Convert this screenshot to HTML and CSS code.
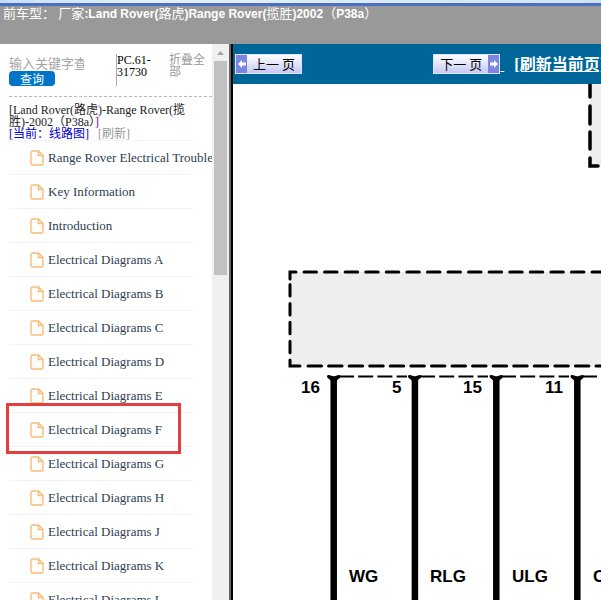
FILE: index.html
```html
<!DOCTYPE html>
<html lang="zh-CN">
<head>
<meta charset="utf-8">
<meta name="viewport" content="width=device-width, initial-scale=1">
<title>Range Rover 2002 (P38a)</title>
<link rel="stylesheet" href="styles.css">
</head>
<body>
<svg class="defs" aria-hidden="true">
  <symbol id="file" viewBox="0 0 14 16">
    <path d="M2.500 1H8.500L13 5.500V13.500Q13 15 11.500 15H2.500Q1 15 1 13.500V2.500Q1 1 2.500 1ZM8.500 1V5.500H13" fill="#fffdf8" stroke="#f5bd7c" stroke-width="1.400"/>
  </symbol>
  <symbol id="left" viewBox="0 0 8 8">
    <path d="M4 0V2.500H8V5.500H4V8L0 4Z" fill="#fff"/>
  </symbol>
  <symbol id="right" viewBox="0 0 8 8">
    <path d="M4 0V2.500H0V5.500H4V8L8 4Z" fill="#fff"/>
  </symbol>
</svg>
<header class="header"><span class="wide">前车型：</span> <span class="wide">厂家</span>:Land Rover(<span class="wide">路虎</span>)Range Rover(<span class="wide">揽胜</span>)2002<span class="wide">（</span>P38a<span class="wide">）</span></header>
<div class="frames">
  <aside class="sidebar">
    <div class="panel">
      <div class="tools">
        <form class="search">
          <input class="keyword" type="text" placeholder="输入关键字查询" aria-label="输入关键字查询">
          <button class="submit" type="button">查询</button>
        </form>
        <div class="code">PC.61-31730</div>
        <a class="fold" href="#">折叠全部</a>
      </div>
      <div class="path">[Land Rover(路虎)-Range Rover(揽胜)-2002（P38a）<span class="close">]</span><br><a class="current" href="#">[当前：线路图]</a><a class="refresh" href="#">[刷新]</a></div>
      <ul class="list">
        <li><a href="#"><svg><use href="#file"/></svg>Range Rover Electrical Troubleshooting</a></li>
        <li><a href="#"><svg><use href="#file"/></svg>Key Information</a></li>
        <li><a href="#"><svg><use href="#file"/></svg>Introduction</a></li>
        <li><a href="#"><svg><use href="#file"/></svg>Electrical Diagrams A</a></li>
        <li><a href="#"><svg><use href="#file"/></svg>Electrical Diagrams B</a></li>
        <li><a href="#"><svg><use href="#file"/></svg>Electrical Diagrams C</a></li>
        <li><a href="#"><svg><use href="#file"/></svg>Electrical Diagrams D</a></li>
        <li><a href="#"><svg><use href="#file"/></svg>Electrical Diagrams E</a></li>
        <li class="marked"><a href="#"><svg><use href="#file"/></svg>Electrical Diagrams F</a></li>
        <li><a href="#"><svg><use href="#file"/></svg>Electrical Diagrams G</a></li>
        <li><a href="#"><svg><use href="#file"/></svg>Electrical Diagrams H</a></li>
        <li><a href="#"><svg><use href="#file"/></svg>Electrical Diagrams J</a></li>
        <li><a href="#"><svg><use href="#file"/></svg>Electrical Diagrams K</a></li>
        <li><a href="#"><svg><use href="#file"/></svg>Electrical Diagrams L</a></li>
      </ul>
    </div>
    <div class="scrollbar" aria-hidden="true">
      <svg class="up" viewBox="0 0 17 17"><path d="M5 11H12L8.500 7Z" fill="#a3a3a3"/></svg>
      <div class="thumb"></div>
    </div>
  </aside>
  <main class="main">
    <nav class="pager">
      <button class="page" type="button"><span class="arrow"><svg><use href="#left"/></svg></span><span class="label">上一 页</span></button>
      <div class="onward">
        <button class="page" type="button"><span class="label">下一 页</span><span class="arrow"><svg><use href="#right"/></svg></span></button>
        <a class="tail" href="#">&nbsp;</a>
        <a class="reload" href="#">[刷新当前页]</a>
      </div>
    </nav>
    <svg class="diagram" viewBox="233 84 368 516" preserveAspectRatio="xMinYMin slice">
      <g fill="#eee">
        <rect x="590" y="80" width="200" height="86"/>
        <rect x="290" y="272" width="500" height="94"/>
      </g>
      <g fill="none" stroke="#000" stroke-width="3" stroke-linecap="round">
        <path d="M590 80V97M590 106V124M590 132V149M590 158V166H598" stroke-width="3.500"/>
        <path d="M290 279V272H296"/>
        <path d="M304 272H790" stroke-dasharray="12.500 8.070"/>
        <path d="M290 284.500V360" stroke-dasharray="11.500 7.400"/>
        <path d="M290 360V366H300"/>
        <path d="M308 366H790" stroke-dasharray="13.500 7.070"/>
      </g>
      <g fill="none" stroke="#000" stroke-width="2">
        <path d="M339 376.500H407" stroke-dasharray="15 4.200"/>
        <path d="M420 376.500H488" stroke-dasharray="15 4.200"/>
        <path d="M501 376.500H569" stroke-dasharray="15 4.200"/>
        <path d="M582 376.500H790" stroke-dasharray="15 4.200"/>
      </g>
      <g fill="#000" stroke="#000" stroke-width="3" stroke-linejoin="round" stroke-linecap="round">
        <path d="M328.500 376.500L333.700 381L339 376.500L333.700 378Z"/>
        <path d="M409.500 376.500L414.900 381L420 376.500L414.900 378Z"/>
        <path d="M491 376.500L496.300 381L501.500 376.500L496.300 378Z"/>
        <path d="M572 376.500L577.300 381L582.500 376.500L577.300 378Z"/>
      </g>
      <path d="M333.700 378V900M414.900 378V900M496.300 378V900M577.300 378V900" stroke="#000" stroke-width="6.500"/>
      <g class="pins">
        <text x="301" y="393">16</text>
        <text x="392" y="393">5</text>
        <text x="463" y="393">15</text>
        <text x="545" y="393">11</text>
        <text x="349" y="582">WG</text>
        <text x="430" y="582">RLG</text>
        <text x="512" y="582">ULG</text>
        <text x="593" y="582">OG</text>
      </g>
    </svg>
  </main>
</div>
</body>
</html>
```
FILE: styles.css
```css
*,
*::after {
  box-sizing: border-box;
}

body {
  display: flex;
  flex-direction: column;
  height: 100vh;
  margin: 0;
  overflow: hidden;
  background: #fff;
  font-family: "Liberation Serif", "Noto Sans CJK SC", serif;
  font-size: 12px;
  line-height: 12px;
}

a {
  color: inherit;
  text-decoration: none;
}

.defs {
  position: absolute;
  width: 0;
  height: 0;
}

.header {
  flex: none;
  height: 44px;
  padding: 4px 3px;
  background:
    linear-gradient(to right, #c9ddf2, #e6f0fa 25%, #d3e1f4) 0 0 / 100% 3px no-repeat,
    linear-gradient(#4a70c4, #4a70c4) 0 3px / 100% 3px no-repeat,
    #999;
  color: #fff;
  font: bold 12px/20px "Liberation Sans", "Noto Sans CJK SC", sans-serif;
  white-space: nowrap;
}

.wide {
  font-size: 13px;
  font-weight: 400;
}

.frames {
  display: flex;
  flex: 1;
  min-height: 0;
}

.sidebar {
  display: flex;
  flex: none;
  width: 233px;
  border-right: 2px solid #000;
}

.panel {
  flex: 1;
  min-width: 0;
  padding: 10px 0 0 9px;
  overflow: hidden;
}

.tools {
  display: flex;
  height: 43px;
  border-bottom: 1px dashed #bbb;
}

.search {
  width: 107px;
  padding-top: 3px;
}

.keyword {
  display: block;
  width: 75px;
  height: 14px;
  padding: 0;
  border: 0;
  outline: 0;
  background: none;
  font: 13px/14px "Liberation Sans", "Noto Sans CJK SC", sans-serif;
}

.keyword::placeholder {
  color: #a5a5a5;
  opacity: 1;
}

.submit {
  display: block;
  width: 46px;
  height: 15px;
  padding: 0;
  border: 0;
  border-radius: 4px;
  background: #0075c8;
  color: #fff;
  font: 12px/14px "Noto Sans CJK SC", sans-serif;
}

.code {
  width: 53px;
  height: 32px;
  padding-right: 12px;
  border-left: 1px solid #aaa;
  overflow-wrap: anywhere;
}

.fold {
  width: 37px;
  color: #999;
}

.path {
  padding: 7px 20px 0 0;
  color: #222;
}

.close {
  color: #808;
}

.current {
  color: #00c;
}

.refresh {
  margin-left: 9px;
  color: #999;
}

.list {
  margin: 0;
  padding: 0;
  list-style: none;
}

.list li {
  position: relative;
  width: 184px;
  border-bottom: 1px solid #f2f2f2;
}

.list li:first-child {
  border-top: 1px solid #f4f4f4;
}

.list a {
  display: flex;
  align-items: center;
  gap: 4px;
  height: 33px;
  padding-left: 21px;
  color: #2c3e50;
  font-size: 13px;
  line-height: 16px;
  white-space: nowrap;
}

.list svg {
  flex: none;
  width: 14px;
  height: 16px;
}

.list .marked::after {
  content: "";
  position: absolute;
  top: -10px;
  left: -3px;
  z-index: 1;
  width: 175px;
  height: 51px;
  border: 3px solid #e53e3e;
  pointer-events: none;
}

.scrollbar {
  flex: none;
  width: 19px;
  border-right: 2px solid #666;
  background: #f0f0f0;
}

.up {
  display: block;
  width: 17px;
  height: 17px;
}

.thumb {
  width: 13px;
  height: 214px;
  margin: 0 2px;
  background: #c1c1c1;
}

.main {
  display: flex;
  flex: 1;
  flex-direction: column;
  min-width: 0;
}

.pager {
  display: flex;
  flex: none;
  align-items: center;
  justify-content: space-between;
  height: 40px;
  padding-left: 2px;
  overflow: hidden;
  background: #069;
}

.onward {
  display: flex;
  flex: none;
  align-items: center;
  margin-right: -4px;
}

.page {
  display: flex;
  flex: none;
  align-items: stretch;
  width: 67px;
  height: 20px;
  padding: 0;
  border: 1px solid #dde5ff;
  background: linear-gradient(#fff, #c5c8f5);
  color: #000;
  font: 13px/18px "Noto Sans CJK SC", sans-serif;
}

.label {
  flex: 1;
}

.arrow {
  display: flex;
  align-items: center;
  justify-content: center;
  width: 11px;
  background: #7b86e0;
}

.arrow svg {
  width: 8px;
  height: 8px;
}

.tail,
.reload {
  padding-top: 2px;
  color: #fff;
  font: bold 16px/20px "Liberation Serif", "Noto Sans CJK SC", serif;
  text-decoration: underline;
}

.reload {
  margin-left: 10px;
}

.diagram {
  display: block;
  flex: 1;
  width: 100%;
  min-height: 0;
}

.pins {
  font: bold 17px "Liberation Sans", sans-serif;
}
```
